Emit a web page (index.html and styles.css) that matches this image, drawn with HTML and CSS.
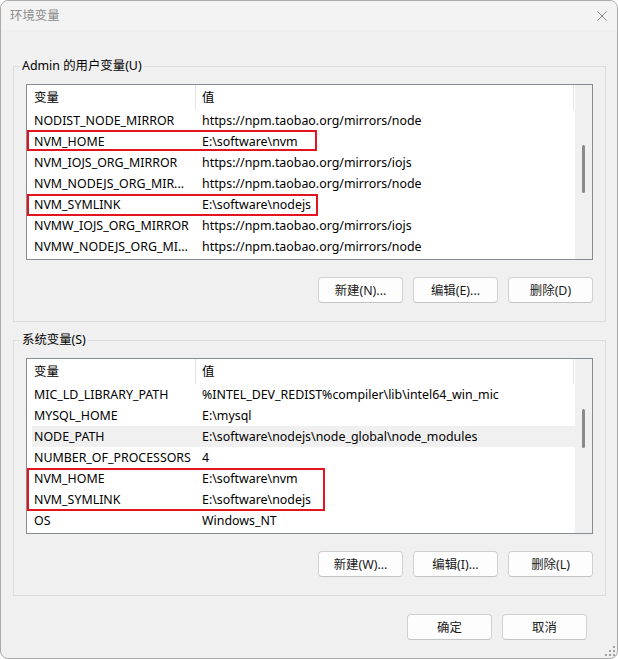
FILE: index.html
```html
<!DOCTYPE html>
<html lang="zh-CN">
<head>
    <meta charset="UTF-8">
    <meta name="viewport" content="width=device-width, initial-scale=1.0">
    <title>环境变量</title>
    <link rel="stylesheet" href="styles.css">
</head>
<body>
    <div class="window">
        <div class="titlebar">
            <span class="title">环境变量</span>
            <svg class="close" width="10" height="10" viewBox="0 0 10 10">
                <path d="M0.5 0.5 L9.5 9.5 M9.5 0.5 L0.5 9.5" stroke="#8a8a8a" stroke-width="1" fill="none"/>
            </svg>
        </div>

        <div class="content">
            <fieldset class="group">
                <legend>Admin 的用户变量(U)</legend>
                <div class="list">
                    <div class="rows">
                        <div class="row head"><div class="c1">变量</div><div class="c2">值</div></div>
                        <div class="row"><div class="c1">NODIST_NODE_MIRROR</div><div class="c2">https://npm.taobao.org/mirrors/node</div></div>
                        <div class="row"><div class="c1">NVM_HOME</div><div class="c2">E:\software\nvm</div></div>
                        <div class="row"><div class="c1">NVM_IOJS_ORG_MIRROR</div><div class="c2">https://npm.taobao.org/mirrors/iojs</div></div>
                        <div class="row"><div class="c1">NVM_NODEJS_ORG_MIR...</div><div class="c2">https://npm.taobao.org/mirrors/node</div></div>
                        <div class="row"><div class="c1">NVM_SYMLINK</div><div class="c2">E:\software\nodejs</div></div>
                        <div class="row"><div class="c1">NVMW_IOJS_ORG_MIRROR</div><div class="c2">https://npm.taobao.org/mirrors/iojs</div></div>
                        <div class="row"><div class="c1">NVMW_NODEJS_ORG_MI...</div><div class="c2">https://npm.taobao.org/mirrors/node</div></div>
                    </div>
                    <div class="scrollbar"><div class="thumb" style="margin-top: 60px; height: 48px;"></div></div>
                    <div class="mark mark-user-home"></div>
                    <div class="mark mark-user-symlink"></div>
                </div>
                <div class="buttons">
                    <button>新建(N)...</button>
                    <button>编辑(E)...</button>
                    <button>删除(D)</button>
                </div>
            </fieldset>

            <fieldset class="group group-system">
                <legend>系统变量(S)</legend>
                <div class="list">
                    <div class="rows">
                        <div class="row head"><div class="c1">变量</div><div class="c2">值</div></div>
                        <div class="row"><div class="c1">MIC_LD_LIBRARY_PATH</div><div class="c2">%INTEL_DEV_REDIST%compiler\lib\intel64_win_mic</div></div>
                        <div class="row"><div class="c1">MYSQL_HOME</div><div class="c2">E:\mysql</div></div>
                        <div class="row hover"><div class="c1">NODE_PATH</div><div class="c2">E:\software\nodejs\node_global\node_modules</div></div>
                        <div class="row"><div class="c1">NUMBER_OF_PROCESSORS</div><div class="c2">4</div></div>
                        <div class="row"><div class="c1">NVM_HOME</div><div class="c2">E:\software\nvm</div></div>
                        <div class="row"><div class="c1">NVM_SYMLINK</div><div class="c2">E:\software\nodejs</div></div>
                        <div class="row"><div class="c1">OS</div><div class="c2">Windows_NT</div></div>
                    </div>
                    <div class="scrollbar"><div class="thumb" style="margin-top: 50px; height: 39px;"></div></div>
                    <div class="mark mark-system-nvm"></div>
                </div>
                <div class="buttons">
                    <button>新建(W)...</button>
                    <button>编辑(I)...</button>
                    <button>删除(L)</button>
                </div>
            </fieldset>
        </div>

        <div class="footer">
            <button>确定</button>
            <button>取消</button>
        </div>

        <svg class="grip" width="10" height="10" viewBox="0 0 10 10">
            <rect x="8" y="0" width="2" height="2" fill="#a0a0a0"/>
            <rect x="4" y="4" width="2" height="2" fill="#a0a0a0"/>
            <rect x="8" y="4" width="2" height="2" fill="#a0a0a0"/>
            <rect x="0" y="8" width="2" height="2" fill="#a0a0a0"/>
            <rect x="4" y="8" width="2" height="2" fill="#a0a0a0"/>
            <rect x="8" y="8" width="2" height="2" fill="#a0a0a0"/>
        </svg>
    </div>
</body>
</html>
```

FILE: styles.css
```css
html {
    background-color: #ffffff;
}

body {
    margin: 0;
    font-family: "Noto Sans", "Noto Sans CJK SC", sans-serif;
    font-size: 12.4px;
    color: #000;
}

.window {
    position: relative;
    width: 618px;
    height: 659px;
    box-sizing: border-box;
    border: 1px solid #aaaaaa;
    border-radius: 8px;
    background-color: #f0f0f0;
    overflow: hidden;
}

.titlebar {
    height: 29px;
    display: flex;
    align-items: center;
    justify-content: space-between;
    padding: 0 10px 0 9px;
    background-color: #f3f3f3;
}

.title {
    color: #8c8c8c;
    line-height: 16px;
}

.close {
    display: block;
}

.content {
    padding: 28px 11px 0 12px;
}

.group {
    margin: 0;
    min-width: 0;
    padding: 10px 12px 18px 12px;
    border: 1px solid #dcdcdc;
}

.group legend {
    margin-left: -6px;
    padding: 0 2px;
    line-height: 16px;
}

.group-system {
    margin-top: 10px;
}

.list {
    position: relative;
    display: flex;
    height: 176px;
    box-sizing: border-box;
    border: 1px solid #868a91;
    background-color: #fff;
    overflow: hidden;
}

.rows {
    flex: 1;
    padding-left: 5px;
}

.row {
    display: flex;
    height: 21px;
    line-height: 21px;
    white-space: nowrap;
}

.row.hover {
    background-color: #f0f0f0;
}

.row .c1 {
    width: 164px;
    box-sizing: border-box;
    padding-left: 2px;
    overflow: hidden;
}

.row .c2 {
    flex: 1;
    padding-left: 6px;
    overflow: hidden;
}

.row.head {
    height: 25px;
    line-height: 25px;
}

.row.head .c1,
.row.head .c2 {
    border-right: 1px solid #e5e5e5;
}

.row.head .c2 {
    margin-right: 1px;
}

.scrollbar {
    width: 17px;
    background-color: #f0f0f0;
}

.thumb {
    width: 3px;
    margin-left: 7px;
    border-radius: 2px;
    background-color: #8a8a8a;
}

.mark {
    position: absolute;
    left: 0;
    box-sizing: border-box;
    border: 2px solid #e3131f;
}

.mark-user-home {
    top: 45px;
    width: 290px;
    height: 21px;
}

.mark-user-symlink {
    top: 109px;
    width: 291px;
    height: 22px;
}

.mark-system-nvm {
    top: 109px;
    width: 298px;
    height: 43px;
}

.buttons,
.footer {
    display: flex;
    justify-content: flex-end;
    gap: 10px;
}

.buttons {
    margin-top: 17px;
}

.footer {
    margin-top: 18px;
    padding-right: 30px;
}

button {
    width: 85px;
    height: 26px;
    padding: 0;
    font-family: inherit;
    font-size: 12.4px;
    color: #1a1a1a;
    background-color: #fdfdfd;
    border: 1px solid #d0d0d0;
    border-bottom-color: #c4c4c4;
    border-radius: 4px;
}

.grip {
    position: absolute;
    right: 2px;
    bottom: 2px;
}
```
